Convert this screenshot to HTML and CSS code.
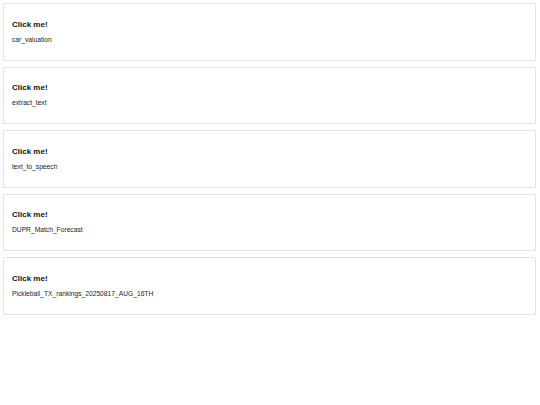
FILE: index.html
```html
<!DOCTYPE html>
<html lang="en">
<head>
  <meta charset="UTF-8">
  <meta name="viewport" content="width=device-width, initial-scale=1.0">
  <title>Apps</title>
  <link rel="stylesheet" href="styles.css">
</head>
<body>
  <div class="app-list">
    <div class="app-card">
      <h3>Click me!</h3>
      <p>car_valuation</p>
    </div>
    <div class="app-card">
      <h3>Click me!</h3>
      <p>extract_text</p>
    </div>
    <div class="app-card">
      <h3>Click me!</h3>
      <p>text_to_speech</p>
    </div>
    <div class="app-card">
      <h3>Click me!</h3>
      <p>DUPR_Match_Forecast</p>
    </div>
    <div class="app-card">
      <h3>Click me!</h3>
      <p>Pickleball_TX_rankings_20250817_AUG_16TH</p>
    </div>
  </div>
</body>
</html>
```

FILE: styles.css
```css
body, html {
  margin: 0;
  padding: 0;
  background-color: #fff;
  color: #222;
  font-family: "Liberation Sans", Arial, sans-serif;
}

.app-list {
  display: flex;
  flex-direction: column;
  gap: 6px;
  padding: 3px 4px 3px 3px;
}

.app-card {
  border: 1px solid #e3e3e3;
  border-radius: 1px;
  padding: 15.5px 8px 16px;
  cursor: pointer;
}

.app-card h3 {
  margin: 0 0 7px;
  font-size: 8px;
  line-height: 9px;
  color: #111;
}

.app-card p {
  margin: 0;
  font-size: 6.7px;
  line-height: 8px;
}
```
